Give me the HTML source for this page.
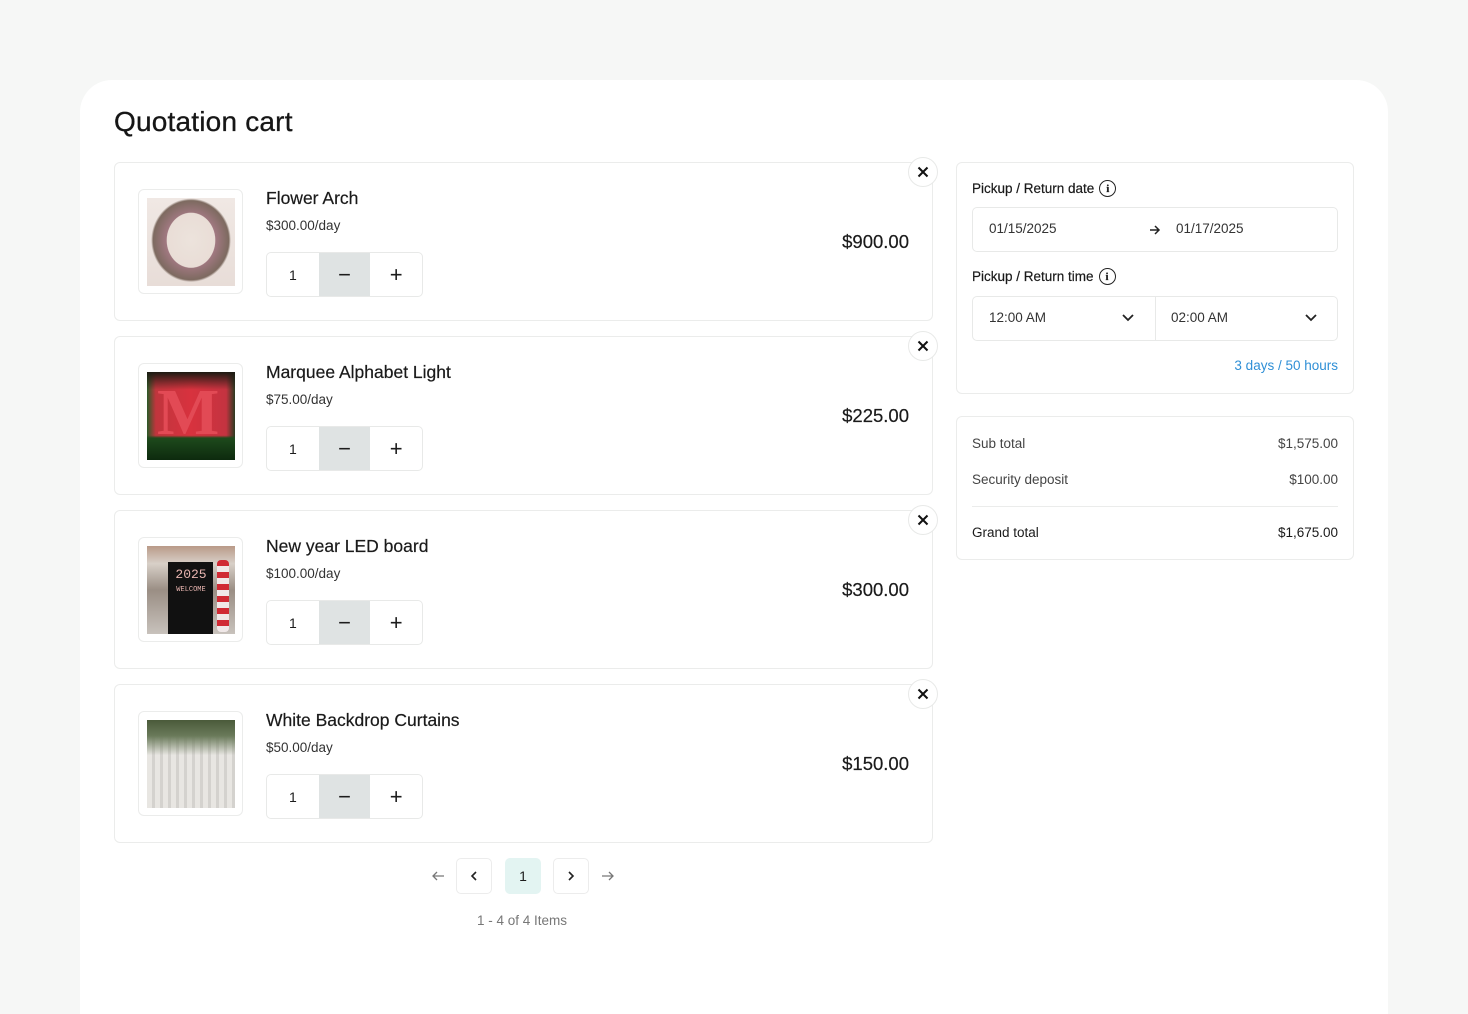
<!DOCTYPE html>
<html style="overflow:hidden;height:1014px"><head><meta charset="utf-8"><style>
*{box-sizing:border-box;margin:0;padding:0}
body{width:1468px;height:1014px;background:#f6f7f6;font-family:"Liberation Sans",sans-serif;color:#1c1c1c;position:relative;overflow:hidden}
.main{position:absolute;left:80px;top:80px;width:1308px;height:934px;background:#fff;border-radius:32px 32px 0 0}
.abs{position:absolute}
h1{position:absolute;left:114px;top:106px;font-size:28px;font-weight:normal;letter-spacing:0.2px;color:#161616;-webkit-text-stroke:0.3px #161616}
.item{position:absolute;left:114px;width:819px;height:159px;border:1px solid #ebeceb;border-radius:6px;background:#fff}
.thumb{position:absolute;left:23px;top:26px;width:105px;height:105px;border:1px solid #ebeceb;border-radius:6px}
.img{position:absolute;left:8px;top:8px;width:88px;height:88px}
.name{position:absolute;left:151px;top:25px;font-size:17.5px;color:#1a1a1a;-webkit-text-stroke:0.2px #1a1a1a}
.pr{position:absolute;left:151px;top:55px;font-size:13.5px;color:#333}
.qty{position:absolute;left:151px;top:89px;width:157px;height:45px;border:1px solid #e8e9e8;border-radius:5px;overflow:hidden;display:flex}
.qty div{width:52px;height:100%;display:flex;align-items:center;justify-content:center;font-size:14px}
.qty .m{background:#dfe3e3;font-size:22px}
.qty .p{font-size:22px}
.tot{position:absolute;right:23px;top:68px;font-size:18.5px;color:#1a1a1a;-webkit-text-stroke:0.2px #1a1a1a}
.x{position:absolute;left:793px;top:-6px;width:30px;height:30px;border-radius:50%;background:#fff;border:1px solid #e8e9e8;display:flex;align-items:center;justify-content:center}
.panel{position:absolute;left:956px;width:398px;border:1px solid #ebeceb;border-radius:6px;background:#fff}
.lbl{position:absolute;left:15px;font-size:13.5px;color:#1a1a1a;display:flex;align-items:center;gap:5px;-webkit-text-stroke:0.2px #1a1a1a}
.info{width:17px;height:17px;border:1.5px solid #222;border-radius:50%;font-size:11px;font-weight:bold;display:flex;align-items:center;justify-content:center;font-family:"Liberation Serif",serif}
.box{position:absolute;left:15px;width:366px;height:45px;border:1px solid #e8e9e8;border-radius:5px;font-size:13.5px;color:#333}
.row{position:absolute;left:15px;right:15px;font-size:13.5px;color:#444;display:flex;justify-content:space-between}
.pg{position:absolute;top:858px;width:36px;height:36px;border:1px solid #ececec;border-radius:5px;display:flex;align-items:center;justify-content:center;font-size:14px}
</style></head><body>
<div class="main"></div>
<h1>Quotation cart</h1>

<div class="item" style="top:162px">
 <div class="thumb"><div class="img" style="background:radial-gradient(ellipse 30px 34px at 50% 48%,#ece3dc 0,#e9ddd6 80%,transparent 82%),radial-gradient(ellipse 42px 44px at 50% 48%,#8c6d74 0,#a07880 60%,#7d6a60 90%,transparent 95%),linear-gradient(#f0e8e4,#e8ddd8)"></div></div>
 <div class="name">Flower Arch</div><div class="pr">$300.00/day</div>
 <div class="qty"><div>1</div><div class="m">−</div><div class="p">+</div></div>
 <div class="tot">$900.00</div>
 <div class="x"><svg width="12" height="12" viewBox="0 0 12 12"><path d="M1.5 1.5L10.5 10.5M10.5 1.5L1.5 10.5" stroke="#111" stroke-width="2"/></svg></div>
</div>

<div class="item" style="top:336px">
 <div class="thumb"><div class="img" style="background:linear-gradient(#1c1a12 0,transparent 20%),linear-gradient(transparent 72%,#1e4a1c 75%,#0d2a0e 100%),linear-gradient(90deg,#2a5a28,#c0353d 10%,#d8323e 50%,#c43340 90%,#2a3a20)"><div style="position:absolute;left:10px;top:8px;font:bold 66px/66px 'Liberation Serif',serif;color:#e24a55">M</div></div></div>
 <div class="name">Marquee Alphabet Light</div><div class="pr">$75.00/day</div>
 <div class="qty"><div>1</div><div class="m">−</div><div class="p">+</div></div>
 <div class="tot">$225.00</div>
 <div class="x"><svg width="12" height="12" viewBox="0 0 12 12"><path d="M1.5 1.5L10.5 10.5M10.5 1.5L1.5 10.5" stroke="#111" stroke-width="2"/></svg></div>
</div>

<div class="item" style="top:510px">
 <div class="thumb"><div class="img" style="background:linear-gradient(#b99a88 0,#d8d0c8 20%,#9a8e84 50%,#c8c2bc 100%)"><div style="position:absolute;left:21px;top:16px;width:45px;height:72px;background:#111"></div><div style="position:absolute;left:22px;top:22px;font:13px/13px 'Liberation Mono',monospace;color:#e8b5b0;width:44px;text-align:center">2025<br><span style="font-size:7px">WELCOME</span></div><div style="position:absolute;left:70px;top:14px;width:12px;height:72px;background:repeating-linear-gradient(#d02a34 0 6px,#f0e8e8 6px 12px);border-radius:4px"></div></div></div>
 <div class="name">New year LED board</div><div class="pr">$100.00/day</div>
 <div class="qty"><div>1</div><div class="m">−</div><div class="p">+</div></div>
 <div class="tot">$300.00</div>
 <div class="x"><svg width="12" height="12" viewBox="0 0 12 12"><path d="M1.5 1.5L10.5 10.5M10.5 1.5L1.5 10.5" stroke="#111" stroke-width="2"/></svg></div>
</div>

<div class="item" style="top:684px">
 <div class="thumb"><div class="img" style="background:linear-gradient(#4a5a3a 0,#6a7a5a 18%,transparent 40%),repeating-linear-gradient(90deg,#e8e6e2 0 5px,#d4d2ce 5px 8px)"></div></div>
 <div class="name">White Backdrop Curtains</div><div class="pr">$50.00/day</div>
 <div class="qty"><div>1</div><div class="m">−</div><div class="p">+</div></div>
 <div class="tot">$150.00</div>
 <div class="x"><svg width="12" height="12" viewBox="0 0 12 12"><path d="M1.5 1.5L10.5 10.5M10.5 1.5L1.5 10.5" stroke="#111" stroke-width="2"/></svg></div>
</div>

<svg class="abs" style="left:431px;top:870px" width="14" height="12" viewBox="0 0 14 12"><path d="M13 6H2M6 2L2 6L6 10" stroke="#777" stroke-width="1.3" fill="none"/></svg>
<div class="pg" style="left:456px"><svg width="10" height="12" viewBox="0 0 10 12"><path d="M7 2L3 6L7 10" stroke="#222" stroke-width="1.6" fill="none"/></svg></div>
<div class="pg" style="left:505px;background:#e3f4f2;border-color:#e3f4f2">1</div>
<div class="pg" style="left:553px"><svg width="10" height="12" viewBox="0 0 10 12"><path d="M3 2L7 6L3 10" stroke="#222" stroke-width="1.6" fill="none"/></svg></div>
<svg class="abs" style="left:601px;top:870px" width="14" height="12" viewBox="0 0 14 12"><path d="M1 6H12M8 2L12 6L8 10" stroke="#777" stroke-width="1.3" fill="none"/></svg>
<div class="abs" style="left:477px;top:913px;font-size:13.5px;color:#777">1 - 4 of 4 Items</div>

<div class="panel" style="top:162px;height:232px">
 <div class="lbl" style="top:17px">Pickup / Return date <span class="info">i</span></div>
 <div class="box" style="top:44px"><span class="abs" style="left:16px;top:13px">01/15/2025</span><svg class="abs" style="left:176px;top:16px" width="12" height="12" viewBox="0 0 12 12"><path d="M1 6H10M6 2L10 6L6 10" stroke="#222" stroke-width="1.5" fill="none"/></svg><span class="abs" style="left:203px;top:13px">01/17/2025</span></div>
 <div class="lbl" style="top:105px">Pickup / Return time <span class="info">i</span></div>
 <div class="box" style="top:133px"><span class="abs" style="left:16px;top:13px">12:00 AM</span><svg class="abs" style="left:148px;top:15px" width="14" height="12" viewBox="0 0 14 12"><path d="M2 3L7 8L12 3" stroke="#222" stroke-width="1.8" fill="none"/></svg><div class="abs" style="left:182px;top:0;width:1px;height:43px;background:#e8e9e8"></div><span class="abs" style="left:198px;top:13px">02:00 AM</span><svg class="abs" style="left:331px;top:15px" width="14" height="12" viewBox="0 0 14 12"><path d="M2 3L7 8L12 3" stroke="#222" stroke-width="1.8" fill="none"/></svg></div>
 <div class="abs" style="right:15px;top:195px;font-size:13.5px;color:#2f8fd6">3 days / 50 hours</div>
</div>

<div class="panel" style="top:416px;height:144px">
 <div class="row" style="top:19px"><span>Sub total</span><span>$1,575.00</span></div>
 <div class="row" style="top:55px"><span>Security deposit</span><span>$100.00</span></div>
 <div class="abs" style="left:15px;right:15px;top:89px;height:1px;background:#ebeceb"></div>
 <div class="row" style="top:108px;color:#1a1a1a"><span>Grand total</span><span>$1,675.00</span></div>
</div>
</body></html>
